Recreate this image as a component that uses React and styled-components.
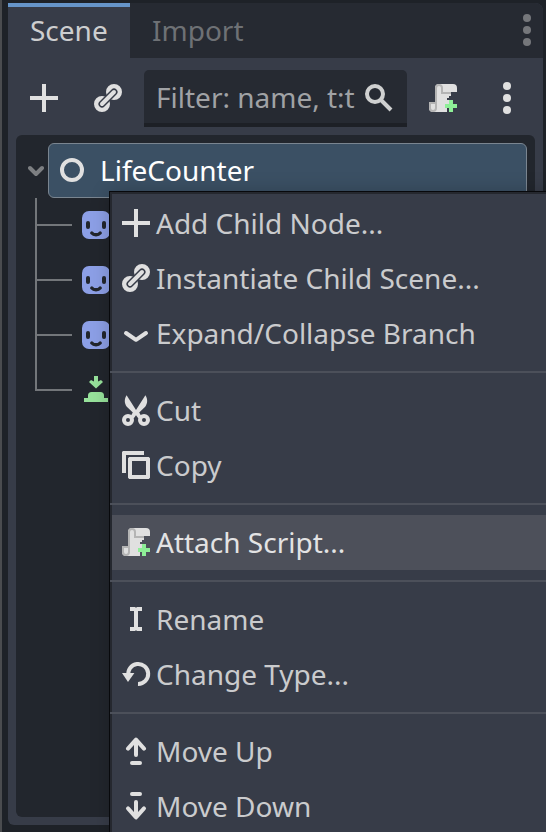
import React from "react";
import styled, { createGlobalStyle, css } from "styled-components";

const Global = createGlobalStyle`
  *, *::before, *::after { box-sizing: border-box; }
  html, body { margin: 0; background: #1d2128; }
  body { width: 546px; height: 832px; overflow: hidden; }
`;

const Window = styled.div`
  position: relative;
  width: 546px;
  height: 832px;
  overflow: hidden;
  padding: 3px 3px 7px 6px;
  border-left: 2px solid #4a4c4f;
  background: #1e2228;
  color: #cdcecf;
  font: 28px/55px "Noto Sans", sans-serif;
  white-space: nowrap;
`;

const Dock = styled.section`
  display: flex;
  flex-direction: column;
  height: 822px;
  border-radius: 0 8px 6px 6px;
  background: #373c48;
  overflow: hidden;
`;

const TabBar = styled.div`
  display: flex;
  flex: 0 0 55px;
  background: #262a32;
`;

const Tab = styled.div`
  padding: 0 22px;
  color: #6e7175;
  ${(p) =>
    p.$active &&
    css`
      width: 122px;
      background: #373c48;
      box-shadow: inset 0 4px #6695c9;
      color: #cdcecf;
    `}
`;

const TabMenu = styled.div`
  margin: 11px 0 0 auto;
  height: 32px;
`;

const Toolbar = styled.div`
  display: flex;
  align-items: center;
  flex: 0 0 80px;
  padding: 0 20px;
`;

const ToolButton = styled.div`
  display: flex;
  width: 32px;
  margin-right: ${(p) => p.$gap || 0}px;
`;

const Filter = styled.div`
  display: flex;
  align-items: flex-start;
  width: 263px;
  height: 57px;
  margin: 1px 20px 0 0;
  padding-left: 12px;
  border-radius: 5px 5px 0 0;
  border-bottom: 4px solid #1d2026;
  background: #262a32;
  color: #a0a2a5;
`;

const FilterText = styled.span`
  width: 207px;
  height: 53px;
  overflow: hidden;
`;

const FilterIcon = styled.div`
  padding-top: 12px;
`;

const Tree = styled.div`
  flex: 1;
  margin: -3px 8px 8px;
  padding-top: 8px;
  border-radius: 6px;
  background: #22262d;
`;

const RootRow = styled.div`
  display: flex;
  align-items: center;
  height: 55px;
`;

const Chevron = styled.div`
  display: flex;
  width: 32px;
  padding-left: 12px;
`;

const Selected = styled.div`
  display: flex;
  align-items: flex-start;
  width: 479px;
  height: 55px;
  padding-left: 7px;
  gap: 12px;
  border: 1px solid #7a8590;
  border-radius: 6px;
  background: #3b5064;
  color: #fff;
  line-height: 53px;
  svg {
    margin-top: 10px;
  }
`;

const ChildRow = styled.div`
  display: flex;
  height: 55px;
  padding-left: 19px;
  align-items: flex-start;
`;

const Guide = styled.div`
  width: 37px;
  height: 55px;
  margin-right: 8px;
  &::before {
    content: "";
    display: block;
    height: 28px;
    border: solid #73767a;
    border-width: 0 0 2px 2px;
  }
  &::after {
    content: "";
    display: ${(p) => (p.$last ? "none" : "block")};
    height: 27px;
    border-left: 2px solid #73767a;
  }
`;

const NodeIcon = styled.div`
  display: flex;
  padding-top: 11px;
`;

const Menu = styled.div`
  position: absolute;
  left: 107px;
  top: 191px;
  width: 460px;
  height: 660px;
  padding-top: 4px;
  border: 1px solid #08090c;
  background: #373c48;
  box-shadow: inset 2px 2px #25282f, 0 0 18px rgba(0, 0, 0, 0.2);
`;

const MenuItem = styled.div`
  display: flex;
  align-items: flex-start;
  height: 55px;
  margin-left: 2px;
  padding-left: 8px;
  gap: 4px;
  background: ${(p) => (p.$hover ? "#4d505a" : "transparent")};
  color: ${(p) => (p.$hover ? "#e3e3e4" : "#cacbcd")};
  svg {
    margin-top: 11px;
  }
`;

const Separator = styled.div`
  height: 22px;
  padding-top: 10px;
  &::before {
    content: "";
    display: block;
    height: 2px;
    background: #4c505a;
  }
`;

const Svg = styled.svg`
  display: block;
  flex: none;
  width: 32px;
  height: 32px;
  color: ${(p) => p.$color || "#e0e0e0"};
`;

const Icon = ({ color, children }) => (
  <Svg viewBox="0 0 16 16" $color={color} fill="currentColor">
    {children}
  </Svg>
);

const line = { fill: "none", stroke: "currentColor", strokeWidth: 2, strokeLinecap: "round", strokeLinejoin: "round" };

const AddIcon = () => (
  <Icon>
    <path d="M7 1h2v6h6v2H9v6H7V9H1V7h6z" />
  </Icon>
);

const LinkIcon = ({ id }) => (
  <Icon>
    <mask id={id} maskUnits="userSpaceOnUse" x="0" y="0" width="16" height="16">
      <path fill="#fff" d="M0 0h16v16H0z" />
      <path d="M5 11l6-6" stroke="#000" strokeWidth="3.5" strokeLinecap="round" />
    </mask>
    <g mask={`url(#${id})`} fill="none" stroke="currentColor" strokeWidth="2.6">
      <circle cx="11" cy="5" r="2.7" />
      <circle cx="5" cy="11" r="2.7" />
    </g>
    <path d="M5 11l6-6" {...line} />
  </Icon>
);

const SearchIcon = () => (
  <Icon color="#cfd0d0">
    <circle cx="6" cy="6" r="4" {...line} />
    <path d="M9 9l5 5" {...line} strokeLinecap="butt" />
  </Icon>
);

const ScriptIcon = () => (
  <Icon>
    <path d="M6 1h7a2 2 0 0 1 2 2v2h-3v2h-1v1h-1v1h1v2H9v2h1v2H3a2 2 0 0 1-2-2v-3h3V3a2 2 0 0 1 2-2z" />
    <path
      fill="#b4b4b4"
      fillRule="evenodd"
      d="M6 1a2 2 0 0 0-2 2v7H1v3a2 2 0 0 0 4 0V3a1 1 0 0 1 2 0v3h5V5H8V3a2 2 0 0 0-2-2zM2 11h2v2a1 1 0 0 1-2 0z"
    />
    <path fill="#8eef97" d="M11 9h2v2h2v2h-2v2h-2v-2H9v-2h2z" />
  </Icon>
);

const DotsIcon = ({ color }) => (
  <Icon color={color}>
    <circle cx="8" cy="2" r="2" />
    <circle cx="8" cy="8" r="2" />
    <circle cx="8" cy="14" r="2" />
  </Icon>
);

const RingIcon = () => (
  <Icon>
    <circle cx="8" cy="8" r="5" {...line} />
  </Icon>
);

const SpriteIcon = () => (
  <Icon color="#8c9fe6">
    <rect x="1" y="1" width="14" height="14" rx="3.5" />
    <g fill="#22262d">
      <rect x="3" y="6" width="2" height="4" rx="1" />
      <rect x="11" y="6" width="2" height="4" rx="1" />
    </g>
    <path d="M5.900 12c1 1.200 3.200 1.200 4.200 0" fill="none" stroke="#22262d" strokeWidth="1.7" strokeLinecap="round" />
  </Icon>
);

const SpawnIcon = () => (
  <Icon color="#97e29b">
    <path d="M7 1h2v2.800l1.500-.8 1 1L8 7.200 4.500 4l1-1L7 3.800z" />
    <path d="M4 12v-1.200A1.800 1.800 0 0 1 5.800 9h4.400a1.800 1.800 0 0 1 1.800 1.800V12h2v2H2v-2z" />
  </Icon>
);

const ExpandIcon = () => (
  <Icon>
    <path d="M3 8l5 3.400 5-3.400" {...line} />
  </Icon>
);

const CutIcon = () => (
  <Icon>
    <path d="M3.300.6C2 2.600 2.200 4.600 3.400 6.400L6.400 9.300 5.400 11l1.400 1.200L8 10.600l1.200 1.600 1.400-1.200-1-1.700 3-2.900C13.800 4.600 14 2.600 12.700.6L8 8z" />
    <circle cx="4" cy="13" r="2" {...line} />
    <circle cx="12" cy="13" r="2" {...line} />
  </Icon>
);

const CopyIcon = () => (
  <Icon>
    <path d="M1.500 1H12v2H3v9H1V1.500z" />
    <path fillRule="evenodd" d="M4.600 4h9.800l.6.6v9.800l-.6.6H4.600l-.6-.6V4.600zM6 6v7h7V6z" />
  </Icon>
);

const RenameIcon = () => (
  <Icon>
    <path d="M5 2h2.600l.4.5.4-.5H11v2H9v8h2v2H8.400l-.4-.5-.4.5H5v-2h2V4H5z" />
  </Icon>
);

const ReloadIcon = () => (
  <Icon>
    <path d="M4.200 9A5 5 0 1 1 9 13" {...line} strokeLinecap="butt" />
    <path d="M1 7.500h6.200L4 12z" />
  </Icon>
);

const MoveUpIcon = () => (
  <Icon>
    <path d="M8 10V2.400M4 6.800l4-4.500 4 4.500M6 14h4" {...line} />
  </Icon>
);

const MoveDownIcon = () => (
  <Icon>
    <path d="M8 6v7.600M4 9.200l4 4.500 4-4.500M6 2h4" {...line} />
  </Icon>
);

const menuGroups = [
  [
    { label: "Add Child Node...", icon: <AddIcon /> },
    { label: "Instantiate Child Scene...", icon: <LinkIcon id="menu-link" /> },
    { label: "Expand/Collapse Branch", icon: <ExpandIcon /> },
  ],
  [
    { label: "Cut", icon: <CutIcon /> },
    { label: "Copy", icon: <CopyIcon /> },
  ],
  [{ label: "Attach Script...", icon: <ScriptIcon />, hover: true }],
  [
    { label: "Rename", icon: <RenameIcon /> },
    { label: "Change Type...", icon: <ReloadIcon /> },
  ],
  [
    { label: "Move Up", icon: <MoveUpIcon /> },
    { label: "Move Down", icon: <MoveDownIcon /> },
  ],
];

const childNodes = [<SpriteIcon />, <SpriteIcon />, <SpriteIcon />, <SpawnIcon />];

export default function App() {
  return (
    <>
      <Global />
      <Window>
        <Dock>
          <TabBar>
            <Tab $active>Scene</Tab>
            <Tab>Import</Tab>
            <TabMenu>
              <DotsIcon color="#75777b" />
            </TabMenu>
          </TabBar>
          <Toolbar>
            <ToolButton $gap={32}>
              <AddIcon />
            </ToolButton>
            <ToolButton $gap={20}>
              <LinkIcon id="toolbar-link" />
            </ToolButton>
            <Filter>
              <FilterText>Filter: name, t:t</FilterText>
              <FilterIcon>
                <SearchIcon />
              </FilterIcon>
            </Filter>
            <ToolButton $gap={32}>
              <ScriptIcon />
            </ToolButton>
            <ToolButton>
              <DotsIcon />
            </ToolButton>
          </Toolbar>
          <Tree>
            <RootRow>
              <Chevron>
                <svg width="16" height="12" viewBox="0 0 16 12" fill="none">
                  <path d="M2 3l6 6 6-6" stroke="#7d7f82" strokeWidth="4" strokeLinecap="round" strokeLinejoin="round" />
                </svg>
              </Chevron>
              <Selected>
                <RingIcon />
                LifeCounter
              </Selected>
            </RootRow>
            {childNodes.map((icon, i) => (
              <ChildRow key={i}>
                <Guide $last={i === childNodes.length - 1} />
                <NodeIcon>{icon}</NodeIcon>
              </ChildRow>
            ))}
          </Tree>
        </Dock>
        <Menu>
          {menuGroups.map((group, i) => (
            <React.Fragment key={i}>
              {i > 0 && <Separator />}
              {group.map((item) => (
                <MenuItem key={item.label} $hover={item.hover}>
                  {item.icon}
                  {item.label}
                </MenuItem>
              ))}
            </React.Fragment>
          ))}
        </Menu>
      </Window>
    </>
  );
}
